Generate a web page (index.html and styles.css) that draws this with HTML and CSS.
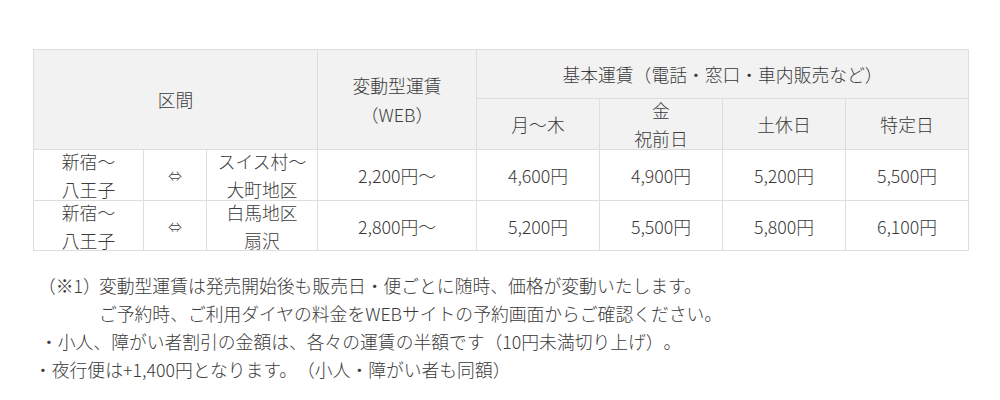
FILE: index.html
```html
<!DOCTYPE html>
<html lang="ja">
<head>
<meta charset="utf-8">
<title>運賃表</title>
<link rel="stylesheet" href="styles.css">
</head>
<body>
<div class="page">
  <table class="fare">
    <colgroup>
      <col class="c-from"><col class="c-arrow"><col class="c-to"><col class="c-web">
      <col class="c-day"><col class="c-day"><col class="c-day"><col class="c-day">
    </colgroup>
    <thead>
      <tr class="r-h1">
        <th colspan="3" rowspan="2"><div class="in span2">区間</div></th>
        <th rowspan="2"><div class="in span2">変動型運賃<br>（WEB）</div></th>
        <th colspan="4"><div class="in">基本運賃（電話・窓口・車内販売など）</div></th>
      </tr>
      <tr class="r-h2">
        <th><div class="in">月～木</div></th>
        <th><div class="in">金<br>祝前日</div></th>
        <th><div class="in">土休日</div></th>
        <th><div class="in">特定日</div></th>
      </tr>
    </thead>
    <tbody>
      <tr class="r-b1">
        <td><div class="in">新宿～<br>八王子</div></td>
        <td><div class="in arrow">⇔</div></td>
        <td><div class="in">スイス村～<br>大町地区</div></td>
        <td><div class="in">2,200円～</div></td>
        <td><div class="in">4,600円</div></td>
        <td><div class="in">4,900円</div></td>
        <td><div class="in">5,200円</div></td>
        <td><div class="in">5,500円</div></td>
      </tr>
      <tr class="r-b2">
        <td><div class="in">新宿～<br>八王子</div></td>
        <td><div class="in arrow">⇔</div></td>
        <td><div class="in">白馬地区<br>扇沢</div></td>
        <td><div class="in">2,800円～</div></td>
        <td><div class="in">5,200円</div></td>
        <td><div class="in">5,500円</div></td>
        <td><div class="in">5,800円</div></td>
        <td><div class="in">6,100円</div></td>
      </tr>
    </tbody>
  </table>

  <div class="notes">
    <div class="note note-1">
      <span class="label">（※1）</span>
      <div class="body">
        <p>変動型運賃は発売開始後も販売日・便ごとに随時、価格が変動いたします。</p>
        <p>ご予約時、ご利用ダイヤの料金をWEBサイトの予約画面からご確認ください。</p>
      </div>
    </div>
    <p class="note note-2">・小人、障がい者割引の金額は、各々の運賃の半額です（10円未満切り上げ）。</p>
    <p class="note note-3">・夜行便は+1,400円となります。（小人・障がい者も同額）</p>
  </div>
</div>
</body>
</html>
```

FILE: styles.css
```css
html, body {
  margin: 0;
  padding: 0;
  background: #ffffff;
}

body {
  font-family: "Noto Sans CJK JP", "Noto Sans", sans-serif;
  font-size: 17.8px;
  font-weight: 300;
  color: #3a3a3a;
  text-spacing-trim: space-all;
}

.page {
  padding: 49px 0 0 33px;
}

.fare {
  border-collapse: collapse;
  table-layout: fixed;
  width: 935px;
}

.c-from { width: 110px; }
.c-arrow { width: 63px; }
.c-to { width: 111px; }
.c-web { width: 159px; }
.c-day { width: 123px; }

.fare th,
.fare td {
  border: 1px solid #dedede;
  padding: 0;
  text-align: center;
  vertical-align: middle;
  font-weight: 300;
}

.fare th {
  background: #f2f2f2;
}

.fare td {
  background: #ffffff;
}

.in {
  display: flex;
  flex-direction: column;
  justify-content: center;
  align-items: center;
  line-height: 28px;
  white-space: nowrap;
}

.in.arrow {
  font-size: 14px;
}

.r-h1 .in { height: 48px; }
.r-h2 .in { height: 50px; }
.r-b1 .in { height: 50px; }
.r-b2 .in { height: 49px; }
.r-h1 .in.span2 { height: 99px; line-height: 29px; }

.notes {
  margin-top: 20px;
  line-height: 28px;
}

.notes p {
  margin: 0;
}

.note-1 {
  display: flex;
  padding-left: 5px;
}

.note-1 .label {
  width: 61px;
  flex: none;
}

.note-2 {
  padding-left: 7px;
}

.note-3 {
  padding-left: 1px;
}
```
